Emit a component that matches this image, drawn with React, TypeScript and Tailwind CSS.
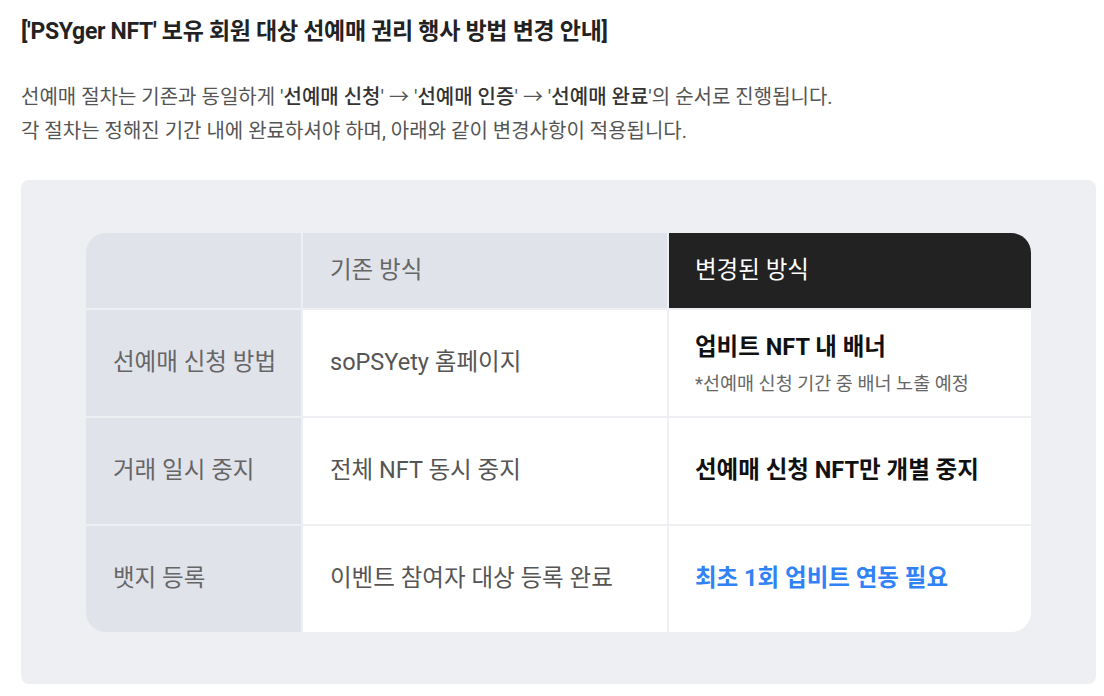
import React from "react";

type Row = {
  label: string;
  before: string;
  after: React.ReactNode;
};

const ROWS: Row[] = [
  {
    label: "선예매 신청 방법",
    before: "soPSYety 홈페이지",
    after: (
      <div className="pt-[2px]">
        <p className="font-bold text-[#111] text-[23.5px] leading-[30px]">업비트 NFT 내 배너</p>
        <p className="text-[18.5px] text-[#666] mt-[9px] leading-[26px]">*선예매 신청 기간 중 배너 노출 예정</p>
      </div>
    ),
  },
  {
    label: "거래 일시 중지",
    before: "전체 NFT 동시 중지",
    after: <p className="font-bold text-[#111] text-[23.5px]">선예매 신청 NFT만 개별 중지</p>,
  },
  {
    label: "뱃지 등록",
    before: "이벤트 참여자 대상 등록 완료",
    after: <p className="font-bold text-[#3182f6] text-[23.5px]">최초 1회 업비트 연동 필요</p>,
  },
];

const App: React.FC = () => {
  return (
    <div
      className="min-h-screen bg-white pl-[21px] pr-[8px] pt-[16px]"
      style={{ fontFamily: 'Roboto, "Noto Sans CJK KR", sans-serif' }}
    >
      <h1 className="text-[23px] font-bold text-[#222] leading-[32px] tracking-[-0.3px]">
        ['PSYger NFT' 보유 회원 대상 선예매 권리 행사 방법 변경 안내]
      </h1>

      <div className="mt-[32px] text-[20px] text-[#555] leading-[34px]">
        <p>
          선예매 절차는 기존과 동일하게 '<b className="font-medium text-[#333]">선예매 신청</b>' → '
          <b className="font-medium text-[#333]">선예매 인증</b>' → '
          <b className="font-medium text-[#333]">선예매 완료</b>'의 순서로 진행됩니다.
        </p>
        <p>각 절차는 정해진 기간 내에 완료하셔야 하며, 아래와 같이 변경사항이 적용됩니다.</p>
      </div>

      {/* comparison box */}
      <div className="mt-[32px] w-[1075px] h-[504px] bg-[#eeeff3] rounded-[8px] pt-[53px] pl-[65px]">
        <div className="w-[945px] rounded-[20px] overflow-hidden grid grid-cols-[215px_364px_362px] gap-[2px] bg-[#eeeff3]">
          {/* header */}
          <div className="h-[75px] bg-[#e1e3ea]" />
          <div className="h-[75px] bg-[#e1e3ea] flex items-center pl-[27px] text-[23.5px] text-[#666]">
            기존 방식
          </div>
          <div className="h-[75px] bg-[#222222] flex items-center pl-[26px] text-[23.5px] text-white">
            변경된 방식
          </div>

          {ROWS.map((row) => (
            <React.Fragment key={row.label}>
              <div className="h-[106px] bg-[#e1e3ea] flex items-center pl-[27px] text-[23.5px] text-[#666]">
                {row.label}
              </div>
              <div className="h-[106px] bg-white flex items-center pl-[27px] text-[23.5px] text-[#555]">
                {row.before}
              </div>
              <div className="h-[106px] bg-white flex items-center pl-[26px]">{row.after}</div>
            </React.Fragment>
          ))}
        </div>
      </div>
    </div>
  );
};

export default App;
